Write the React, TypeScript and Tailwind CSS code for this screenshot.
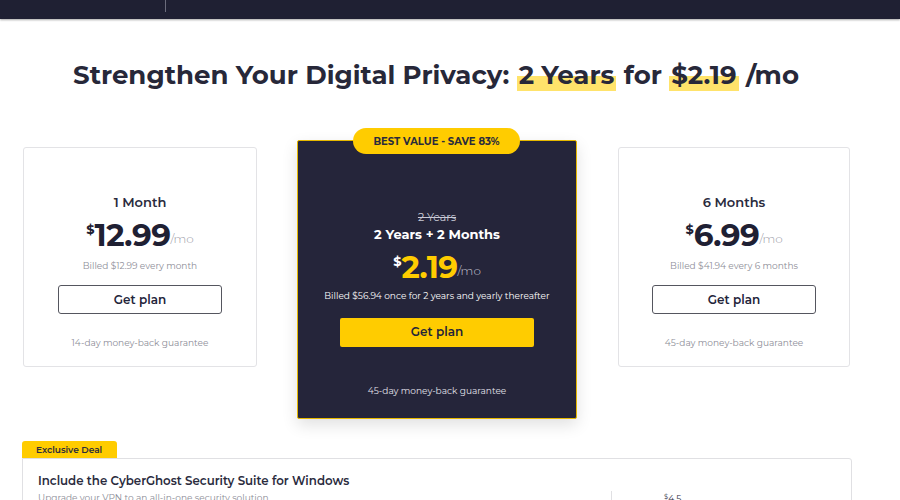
import React from "react";

const font = { fontFamily: "Montserrat, Inter, 'Open Sans', sans-serif" };

function Price({ value, dark }: { value: string; dark?: boolean }) {
  return (
    <div className="flex items-start justify-center leading-none">
      <span className={`mt-[3px] text-[13px] font-bold ${dark ? "text-white" : "text-[#1f2033]"}`}>$</span>
      <span className={`text-[31px] font-bold tracking-[-0.5px] ${dark ? "text-[#ffcc00]" : "text-[#1f2033]"}`}>{value}</span>
      <span className={`mt-[13px] text-[12px] font-light ${dark ? "text-[#c9cad6]" : "text-[#9a9aa6]"}`}>/mo</span>
    </div>
  );
}

function SideCard({ title, price, billed, guarantee }: { title: string; price: string; billed: string; guarantee: string }) {
  return (
    <div className="mt-[7px] flex h-[220px] flex-col items-center rounded-[3px] border border-[#e3e3e6] bg-white pt-[45px]">
      <div className="text-[13px] font-semibold text-[#2a2b3d]">{title}</div>
      <div className="mt-[7px]"><Price value={price} /></div>
      <div className="mt-[8px] text-[9px] text-[#8d8d97]">{billed}</div>
      <button className="mt-[13px] h-[29px] w-[164px] rounded-[3px] border border-[#55565f] text-[12px] font-semibold text-[#23243a]">
        Get plan
      </button>
      <div className="mt-[22px] text-[9px] text-[#8d8d97]">{guarantee}</div>
    </div>
  );
}

export default function App() {
  return (
    <div className="min-h-[500px] w-[900px] overflow-hidden bg-white" style={font}>
      <div className="relative h-[19px] bg-[#1f2033] shadow-[0_1px_2px_rgba(0,0,0,0.35)]">
        <div className="absolute left-[165px] top-0 h-[12px] w-px bg-[#6b6c7c]" />
      </div>

      <div className="w-[872px]">
        <h1 className="mt-[37px] text-center text-[26px] font-bold text-[#272839]">
          Strengthen Your Digital Privacy:{" "}
          <span className="bg-[linear-gradient(transparent_52%,#ffe36b_52%)] px-[2px]">2 Years</span> for{" "}
          <span className="bg-[linear-gradient(transparent_52%,#ffe36b_52%)] px-[2px]">$2.19</span> /mo
        </h1>

        <div className="mt-[45px] flex items-start pl-[23px]">
          <div className="w-[234px]">
            <SideCard title="1 Month" price="12.99" billed="Billed $12.99 every month" guarantee="14-day money-back guarantee" />
          </div>

          <div className="relative ml-[40px] w-[280px]">
            <div className="absolute left-[56px] top-[-12px] flex h-[26px] w-[167px] items-center justify-center rounded-full bg-[#ffcc00] text-[10px] font-bold text-[#2a2b3d]">
              BEST VALUE - SAVE 83%
            </div>
            <div className="flex h-[279px] flex-col items-center rounded-[2px] border border-[#e6b800] bg-[#25253a] pt-[68px] shadow-[0_6px_16px_rgba(0,0,0,0.12)]">
              <div className="text-[11px] text-[#c9cad6] line-through">2 Years</div>
              <div className="-mt-px text-[13px] font-bold text-white">2 Years + 2 Months</div>
              <div className="mt-[8px]"><Price value="2.19" dark /></div>
              <div className="mt-[6px] text-[9px] text-white">Billed $56.94 once for 2 years and yearly thereafter</div>
              <button className="mt-[15px] h-[29px] w-[194px] rounded-[2px] bg-[#ffcc00] text-[12px] font-semibold text-[#23243a]">
                Get plan
              </button>
              <div className="mt-[37px] text-[9px] text-[#e2e2ea]">45-day money-back guarantee</div>
            </div>
          </div>

          <div className="ml-[41px] w-[232px]">
            <SideCard title="6 Months" price="6.99" billed="Billed $41.94 every 6 months" guarantee="45-day money-back guarantee" />
          </div>
        </div>

        <div className="ml-[22px] mt-[22px] w-[830px]">
          <div className="flex h-[17px] w-[95px] items-center rounded-t-[3px] bg-[#ffcc00] pl-[14px] text-[9px] font-semibold text-[#2a2b3d]">
            Exclusive Deal
          </div>
          <div className="flex h-[60px] rounded-r-[3px] border border-[#e0e0e3]">
            <div className="w-[588px] pl-[15px] pt-[14px]">
              <div className="text-[11.8px] font-semibold text-[#2a2b3d]">Include the CyberGhost Security Suite for Windows</div>
              <div className="mt-[1px] text-[9px] leading-[12px] text-[#8d8d97]">Upgrade your VPN to an all-in-one security solution.</div>
            </div>
            <div className="mt-[32px] border-l border-[#e0e0e3] pl-[52px] pt-[2px] text-[9px] leading-[12px] text-[#2a2b3d]">
              <sup>$</sup>4.5
            </div>
          </div>
        </div>
      </div>
    </div>
  );
}
